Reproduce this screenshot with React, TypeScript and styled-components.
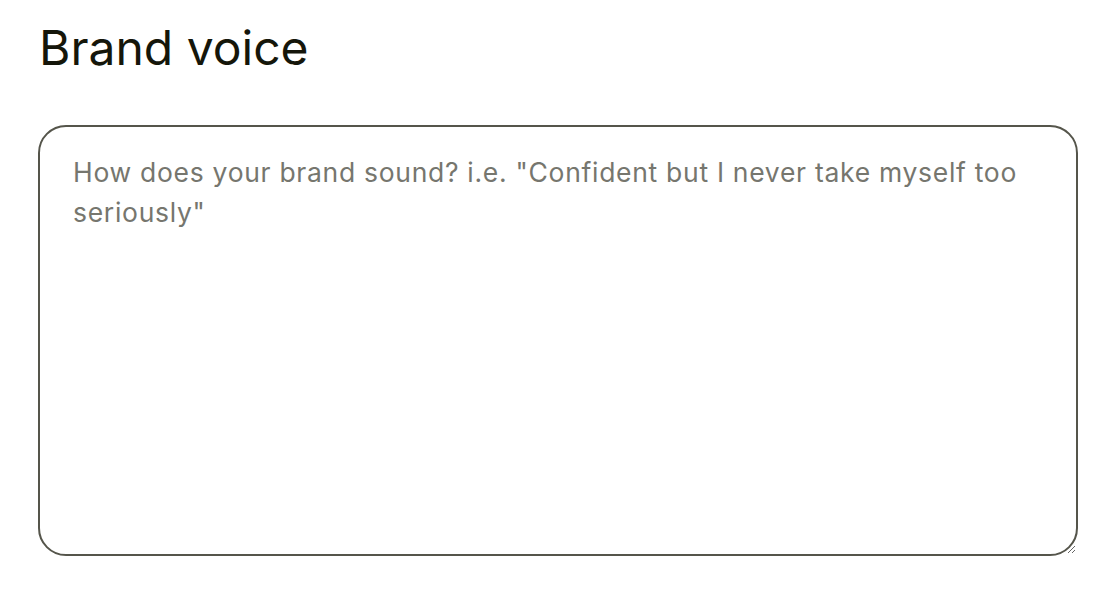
import React from "react";
import styled, { createGlobalStyle } from "styled-components";

const GlobalStyle = createGlobalStyle`
  body {
    margin: 0;
    background: #ffffff;
    font-family: "Inter", "Liberation Sans", sans-serif;
  }
`;

const Page = styled.div`
  display: flex;
  flex-direction: column;
  gap: 47px;
  padding: 18px 38px;
`;

const Heading = styled.h1`
  margin: 0;
  font-size: 48px;
  font-weight: 400;
  line-height: 60px;
  color: #15160a;
  padding-left: 1px;
`;

const VoiceInput = styled.textarea`
  box-sizing: border-box;
  width: 1040px;
  height: 431px;
  padding: 25px 33px;
  border: 2px solid #55554b;
  border-radius: 28px;
  font-family: "Inter", "Liberation Sans", sans-serif;
  font-size: 26.5px;
  line-height: 40px;
  letter-spacing: 0.7px;
  color: #15160a;
  background: #ffffff;
  outline: none;

  &::placeholder {
    color: #76766e;
  }
`;

export default function App() {
  return (
    <>
      <GlobalStyle />
      <Page>
        <Heading>Brand voice</Heading>
        <VoiceInput placeholder={'How does your brand sound? i.e. "Confident but I never take myself too seriously"'} />
      </Page>
    </>
  );
}
